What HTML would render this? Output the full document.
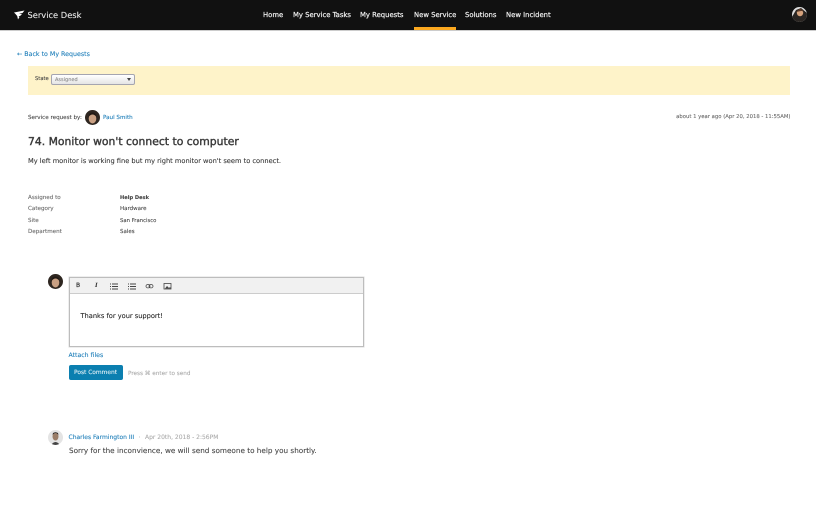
<!DOCTYPE html>
<html><head><meta charset="utf-8"><style>
*{box-sizing:border-box}
html,body{margin:0;padding:0;width:816px;height:510px;background:#fff;overflow:hidden}
body{position:relative;font-family:"DejaVu Sans",sans-serif;font-size:5.5px;color:#333;text-rendering:geometricPrecision;-webkit-text-stroke:.08px}
.t{position:absolute;white-space:nowrap;line-height:10px}
a{color:#1a7cb8;text-decoration:none}
.n{color:#f0f0f0;font-size:6.85px;top:9.500px;-webkit-text-stroke:.2px #f0f0f0}
.g{color:#666}
.av{position:absolute;border-radius:50%;overflow:hidden}
</style></head><body>
<div style="position:absolute;left:0;top:0;width:816px;height:31px;background:#111;border-bottom:1px solid #ccc"></div>
<svg style="position:absolute;left:14px;top:10px" width="11" height="10" viewBox="0 0 11 10"><path d="M0 2.500 L10.500 .5 L8.500 3 L5 3.800 L8 4.200 L6 6 L4.500 6 L5.500 7 L4 9.500 L3.200 6 L1.500 4Z" fill="#fff"/></svg>
<div class="t" style="left:27.500px;top:10px;color:#eee;font-size:8.300px">Service Desk</div>
<div class="t n" style="left:263px">Home</div>
<div class="t n" style="left:293px">My Service Tasks</div>
<div class="t n" style="left:360px">My Requests</div>
<div class="t n" style="left:414px">New Service</div>
<div class="t n" style="left:465px">Solutions</div>
<div class="t n" style="left:506px">New Incident</div>
<div style="position:absolute;left:414px;top:27px;width:42px;height:3px;background:#fba81f"></div>
<svg class="av" style="left:792px;top:7px" width="15" height="15" viewBox="0 0 15 15"><rect width="15" height="15" fill="#ddd"/><path d="M0 15V10L4 3 9 1 15 6V15Z" fill="#2a2522"/><circle cx="8" cy="6" r="3.200" fill="#d6a27c"/><path d="M4 5 8 1.500 12 4 9 4Z" fill="#5a3a28"/></svg>

<div class="t" style="left:17px;top:50px;font-size:6.300px"><a>&#8592;&nbsp;Back to My Requests</a></div>
<div style="position:absolute;left:28px;top:66px;width:762px;height:29px;background:#fef3c9"></div>
<div class="t" style="left:35px;top:74px;color:#444;font-size:5.200px">State</div>
<div style="position:absolute;left:51px;top:74px;width:84px;height:11px;border:1px solid #a5a5b0;border-radius:2px;background:linear-gradient(#fff,#e4e4e4)"></div>
<div class="t" style="left:55px;top:74.500px;color:#888;font-size:5px">Assigned</div>
<div style="position:absolute;left:127px;top:78px;border-left:2.500px solid transparent;border-right:2.500px solid transparent;border-top:3px solid #444"></div>

<div class="t" style="left:28px;top:112.500px;color:#444;font-size:5.600px">Service request by:</div>
<svg class="av" style="left:85px;top:110px" width="15" height="15" viewBox="0 0 15 15"><rect width="15" height="15" fill="#2e2620"/><ellipse cx="7.500" cy="8.500" rx="3.800" ry="5" fill="#c9a083"/><path d="M3.500 7 Q7.500 2 11.500 7 L11 4 Q7.500 1 4 4Z" fill="#221a15"/></svg>
<div class="t" style="left:103px;top:112.500px;font-size:5.600px"><a>Paul Smith</a></div>
<div class="t" style="right:25.500px;top:111.500px;color:#666;font-size:5.300px">about 1 year ago (Apr 20, 2018 - 11:55AM)</div>

<div class="t" style="left:28px;top:135.500px;color:#3a3a3a;font-size:10.800px;line-height:12px;-webkit-text-stroke:.4px #3a3a3a">74. Monitor won't connect to computer</div>
<div class="t" style="left:28px;top:155.500px;color:#333;font-size:6.670px">My left monitor is working fine but my right monitor won't seem to connect.</div>

<div class="t g" style="left:28px;top:192.500px;font-size:5.600px">Assigned to</div>
<div class="t" style="left:120px;top:192.500px;font-weight:700;color:#444;font-size:5.100px">Help Desk</div>
<div class="t g" style="left:28px;top:204px;font-size:5.600px">Category</div>
<div class="t" style="left:120px;top:204px;color:#444">Hardware</div>
<div class="t g" style="left:28px;top:215.500px;font-size:5.600px">Site</div>
<div class="t" style="left:120px;top:215.500px;color:#444;font-size:5.300px">San Francisco</div>
<div class="t g" style="left:28px;top:227px;font-size:5.600px">Department</div>
<div class="t" style="left:120px;top:227px;color:#444">Sales</div>

<svg class="av" style="left:48px;top:274px" width="15" height="15" viewBox="0 0 15 15"><rect width="15" height="15" fill="#2e2620"/><ellipse cx="7.500" cy="8.500" rx="3.800" ry="5" fill="#c9a083"/><path d="M3.500 7 Q7.500 2 11.500 7 L11 4 Q7.500 1 4 4Z" fill="#221a15"/></svg>
<div style="position:absolute;left:69px;top:277px;width:295px;height:70px;border:1px solid #bdbdbd;box-shadow:0 0 0 .5px #ddd"></div>
<div style="position:absolute;left:70px;top:278px;width:293px;height:16px;background:#f1f1f1;border-bottom:1px solid #ccc"></div>
<div class="t" style="left:76px;top:281px;font-size:6px;color:#333;-webkit-text-stroke:.2px #333">B</div>
<div class="t" style="left:95px;top:281px;font-size:6.500px;font-style:italic;font-family:'Liberation Serif',serif;font-weight:700;color:#333">I</div>
<svg style="position:absolute;left:110px;top:283px" width="66" height="7" viewBox="0 0 66 7" fill="#444"><path d="M0 .5h1v1H0zM0 3h1v1H0zM0 5.500h1v1H0zM2 .5h6v1H2zM2 3h6v1H2zM2 5.500h6v1H2zM18 .5h1v1h-1zM18 3h1v1h-1zM18 5.500h1v1h-1zM20 .5h6v1h-6zM20 3h6v1h-6zM20 5.500h6v1h-6z"/><g fill="none" stroke="#444" stroke-width=".8"><rect x="36" y="1.500" width="4" height="3.400" rx="1.700"/><rect x="39" y="1.500" width="4" height="3.400" rx="1.700"/><rect x="54" y=".5" width="7" height="5.500"/></g><path d="M55 5.500 57 3 59 5 60 4 61 5.500Z"/></svg>
<div class="t" style="left:80.500px;top:311px;font-size:6.650px;color:#222">Thanks for your support!</div>

<div class="t" style="left:68.500px;top:351px;font-size:6.200px"><a>Attach files</a></div>
<div style="position:absolute;left:69px;top:365px;width:54px;height:15px;background:#0b7fb0;border-radius:2px"></div>
<div class="t" style="left:74px;top:367.500px;color:#e8f4f8;font-size:5.900px">Post Comment</div>
<div class="t" style="left:128px;top:368.500px;color:#aaa;font-size:5.700px">Press &#8984; enter to send</div>

<svg class="av" style="left:48px;top:430px" width="15" height="15" viewBox="0 0 15 15"><rect width="15" height="15" fill="#e4e4e4"/><ellipse cx="7.500" cy="6.500" rx="3" ry="4" fill="#9a7d68"/><path d="M4.500 5 Q7.500 1 10.500 5 L10 3 Q7.500 1.500 5 3Z" fill="#222"/><path d="M3 15 Q7.500 9 12 15Z" fill="#444"/></svg>
<div class="t" style="left:68.500px;top:432.500px;font-size:6px"><a>Charles Farmington III</a></div>
<div class="t" style="left:138.500px;top:432.500px;font-size:5.900px;color:#aaa">&#183;</div>
<div class="t" style="left:145px;top:432.500px;font-size:6px;color:#aaa">Apr 20th, 2018 - 2:56PM</div>
<div class="t" style="left:69px;top:446px;font-size:7.250px;color:#444">Sorry for the inconvience, we will send someone to help you shortly.</div>
</body></html>
